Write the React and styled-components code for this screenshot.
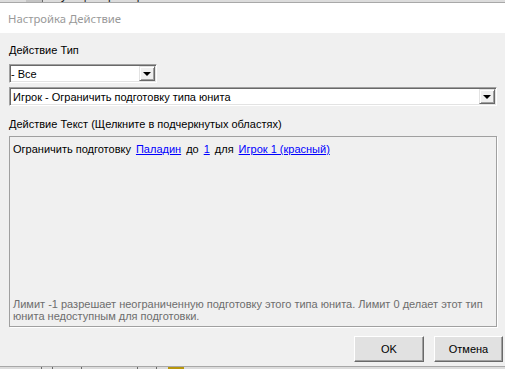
import React from "react";
import styled, { createGlobalStyle } from "styled-components";

const GlobalStyle = createGlobalStyle`
  html, body {
    margin: 0;
    padding: 0;
    background: #f0f0f0;
  }
  body {
    width: 505px;
    height: 369px;
    overflow: hidden;
    font-family: "Liberation Sans", Arial, sans-serif;
    font-size: 11px;
    color: #000;
  }
`;

const Screen = styled.div`
  width: 505px;
  height: 369px;
  display: flex;
  flex-direction: column;
  overflow: hidden;
`;

// кусочек окна под диалогом, видно только низ строки
const BehindStrip = styled.div`
  height: 3px;
  flex: none;
  display: flex;
  overflow: hidden;
  background: #dcdcdc;
  border-bottom: ${(p) => (p.$bottom ? "none" : "1px solid #a8a8a8")};
  border-top: ${(p) => (p.$bottom ? "1px solid #a8a8a8" : "none")};
  box-sizing: border-box;
`;

const StripCell = styled.div`
  flex: none;
  width: ${(p) => p.$w}px;
  height: 100%;
  background: ${(p) => p.$bg || "transparent"};
  border-right: ${(p) => (p.$line ? "1px solid #6a6a6a" : "none")};
  box-sizing: border-box;
  overflow: hidden;
`;

const StripText = styled.div`
  margin-top: -11px;
  padding-left: 9px;
  font-size: 12px;
  line-height: 13px;
  color: #202020;
  white-space: nowrap;
`;

const TitleBar = styled.div`
  height: 30px;
  flex: none;
  background: #fff;
  display: flex;
  align-items: center;
  padding: 0 8px;
  font-family: "Noto Sans", "Open Sans", sans-serif;
  font-size: 11.3px;
  color: #999;
`;

const Body = styled.div`
  flex: 1;
  display: flex;
  flex-direction: column;
  padding: 10px 8px 4px 9px;
  background: #f0f0f0;
`;

const Label = styled.div`
  line-height: 14px;
  margin-top: ${(p) => p.$mt || 0}px;
`;

const Select = styled.div`
  width: ${(p) => p.$w}px;
  height: 19px;
  margin-top: ${(p) => p.$mt}px;
  box-sizing: border-box;
  display: flex;
  align-items: stretch;
  background: #fff;
  border-style: solid;
  border-width: 1px;
  border-color: #a0a0a0 #fff #fff #a0a0a0;
  box-shadow: inset 1px 1px 0 #696969, inset -1px -1px 0 #e3e3e3;
`;

const SelectValue = styled.div`
  flex: 1;
  padding: 0 0 0 ${(p) => p.$pl}px;
  margin-top: 1px;
  line-height: 16px;
  white-space: nowrap;
  overflow: hidden;
`;

const DropButton = styled.div`
  width: 16px;
  margin: 1px 1px 1px 0;
  box-sizing: border-box;
  background: #f0f0f0;
  border-style: solid;
  border-width: 1px;
  border-color: #e3e3e3 #696969 #696969 #e3e3e3;
  box-shadow: inset 1px 1px 0 #fff, inset -1px -1px 0 #a0a0a0;
  display: flex;
  align-items: center;
  justify-content: center;
`;

const Arrow = styled.div`
  width: 0;
  height: 0;
  border-left: 4px solid transparent;
  border-right: 4px solid transparent;
  border-top: 4px solid #000;
  margin-top: 1px;
`;

const TextBox = styled.div`
  margin-top: 5px;
  width: 488px;
  height: 191px;
  box-sizing: border-box;
  border: 1px solid #a0a0a0;
  box-shadow: 1px 1px 0 #fff;
  padding: 5px 3px 4px 3px;
  display: flex;
  flex-direction: column;
  justify-content: space-between;
`;

const Sentence = styled.div`
  display: flex;
  gap: 5px;
  line-height: 14px;
  white-space: nowrap;
`;

const Link = styled.span`
  color: #0000ff;
  text-decoration: underline;
  cursor: pointer;
`;

const Hint = styled.div`
  color: #6d6d6d;
  line-height: 12px;
`;

const Buttons = styled.div`
  margin-top: 9px;
  display: flex;
  justify-content: flex-end;
  gap: 10px;
  margin-right: -6px;
`;

const Button = styled.button`
  width: ${(p) => p.$w}px;
  height: 26px;
  box-sizing: border-box;
  font-family: "Liberation Sans", Arial, sans-serif;
  font-size: 11px;
  color: #000;
  background: #e1e1e1;
  border-style: solid;
  border-width: 1px;
  border-color: #fff #696969 #696969 #fff;
  box-shadow: inset -1px -1px 0 #a0a0a0;
  padding: 0;
`;

const App = () => {
  return (
    <Screen>
      <GlobalStyle />
      <BehindStrip>
        <StripCell $w={26} />
        <StripCell $w={17} $bg="#c4c4c4" $line />
        <StripCell $w={300}>
          <StripText>Функции триггера:</StripText>
        </StripCell>
      </BehindStrip>

      <TitleBar>Настройка Действие</TitleBar>

      <Body>
        <Label>Действие Тип</Label>
        <Select $w={148} $mt={7}>
          <SelectValue $pl={1}>- Все</SelectValue>
          <DropButton>
            <Arrow />
          </DropButton>
        </Select>
        <Select $w={488} $mt={4}>
          <SelectValue $pl={3}>Игрок - Ограничить подготовку типа юнита</SelectValue>
          <DropButton>
            <Arrow />
          </DropButton>
        </Select>

        <Label $mt={11}>Действие Текст (Щелкните в подчеркнутых областях)</Label>
        <TextBox>
          <Sentence>
            <span>Ограничить подготовку</span>
            <Link>Паладин</Link>
            <span>до</span>
            <Link>1</Link>
            <span>для</span>
            <Link>Игрок 1 (красный)</Link>
          </Sentence>
          <Hint>
            Лимит -1 разрешает неограниченную подготовку этого типа юнита. Лимит 0 делает этот тип
            юнита недоступным для подготовки.
          </Hint>
        </TextBox>

        <Buttons>
          <Button $w={70}>OK</Button>
          <Button $w={69}>Отмена</Button>
        </Buttons>
      </Body>

      <BehindStrip $bottom>
        <StripCell $w={42} $line />
        <StripCell $w={11} $line />
        <StripCell $w={29} $line />
        <StripCell $w={56} $line />
        <StripCell $w={19} $line />
        <StripCell $w={11} />
        <StripCell $w={16} $bg="#b8960c" />
      </BehindStrip>
    </Screen>
  );
};

export default App;
